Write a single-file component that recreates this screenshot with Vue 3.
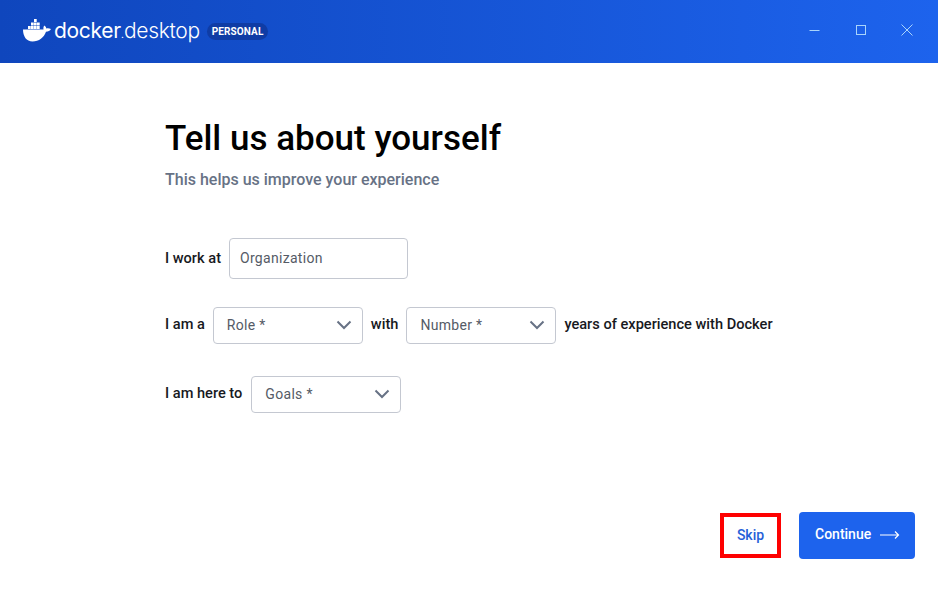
<script setup>
const selects = {
  role: 'Role *',
  number: 'Number *',
  goals: 'Goals *',
}
</script>

<template>
  <div class="app">
    <header class="bar">
      <div class="brand">
        <svg class="whale" width="29" height="24" viewBox="0 0 29 24">
          <g fill="#fff">
            <rect x="5" y="8" width="2.700" height="3" /><rect x="8" y="8" width="2.700" height="3" /><rect x="11" y="8" width="2.700" height="3" /><rect x="14" y="8" width="2.700" height="3" />
            <rect x="8" y="4.500" width="2.700" height="3" /><rect x="11" y="4.500" width="2.700" height="3" /><rect x="14" y="4.500" width="2.700" height="3" />
            <rect x="11" y="1" width="2.700" height="3" />
            <path d="M0 11.500H20.500c-.3-1.600 0-3 .9-4 1.100.8 1.700 1.800 1.900 2.900 1.500-.5 3-.3 4.700.6-1 1.900-2.800 2.700-5 2.800C21 19.500 16 23.500 9.500 23.500 3.500 23.500 0 18.500 0 11.500z" />
          </g>
        </svg>
        <span class="wordmark"><span class="docker">docker</span><span class="dot">.</span><span class="desktop">desktop</span></span>
        <span class="badge">PERSONAL</span>
      </div>
      <div class="win">
        <svg width="12" height="12" viewBox="0 0 12 12"><path d="M0.500 6.500h10" stroke="#a9d4fb" fill="none" /></svg>
        <svg width="12" height="12" viewBox="0 0 12 12"><rect x="1.500" y="1.500" width="9" height="9" stroke="#a9d4fb" fill="none" /></svg>
        <svg width="12" height="12" viewBox="0 0 12 12"><path d="M0.500 .5l11 11M11.500 .5l-11 11" stroke="#a9d4fb" fill="none" /></svg>
      </div>
    </header>

    <main class="content">
      <h1>Tell us about yourself</h1>
      <p class="sub">This helps us improve your experience</p>

      <div class="row row-first">
        <span class="lbl">I work at</span>
        <div class="field input"><span class="val">Organization</span></div>
      </div>

      <div class="row row-second">
        <span class="lbl lift">I am a</span>
        <div class="field select"><span class="val">{{ selects.role }}</span>
          <svg width="16" height="10" viewBox="0 0 16 10"><path d="M1.500 1.500L8 8l6.500-6.500" fill="none" stroke="#677285" stroke-width="2" /></svg>
        </div>
        <span class="lbl lift">with</span>
        <div class="field select"><span class="val">{{ selects.number }}</span>
          <svg width="16" height="10" viewBox="0 0 16 10"><path d="M1.500 1.500L8 8l6.500-6.500" fill="none" stroke="#677285" stroke-width="2" /></svg>
        </div>
        <span class="lbl lift">years of experience with Docker</span>
      </div>

      <div class="row row-third">
        <span class="lbl lift">I am here to</span>
        <div class="field select"><span class="val">{{ selects.goals }}</span>
          <svg width="16" height="10" viewBox="0 0 16 10"><path d="M1.500 1.500L8 8l6.500-6.500" fill="none" stroke="#677285" stroke-width="2" /></svg>
        </div>
      </div>
    </main>

    <footer class="actions">
      <button class="skip"><span class="btn-text">Skip</span></button>
      <button class="continue"><span class="btn-text">Continue</span>
        <svg width="20" height="10" viewBox="0 0 20 10"><path d="M0 5h18.500M15 1.500l3.500 3.500-3.500 3.500" fill="none" stroke="#fff" stroke-width="1.200" /></svg>
      </button>
    </footer>
  </div>
</template>

<style>
html, body { margin: 0; background: #fff; }
</style>

<style scoped>
.app {
  width: 938px;
  height: 599px;
  display: flex;
  flex-direction: column;
  font-family: Roboto, "Liberation Sans", sans-serif;
  overflow: hidden;
  background: #fff;
}
.bar {
  height: 63px;
  flex: none;
  display: flex;
  align-items: center;
  justify-content: space-between;
  background: linear-gradient(90deg, #0f46bd 0%, #1d63ed 100%);
  padding: 0 25px 0 23px;
}
.brand { display: flex; align-items: center; }
.whale { margin-right: 2px; margin-top: -3px; }
.wordmark {
  font-family: Inter, Lato, sans-serif;
  font-size: 21px;
  color: #fff;
  letter-spacing: -0.3px;
  line-height: 26px;
  font-weight: 300;
  margin-top: 1px;
}
.docker { font-weight: 400; }
.desktop { font-weight: 300; }
.dot { font-weight: 300; font-size: 12px; }
.badge {
  margin-left: 7px;
  background: #0f3ca5;
  color: #fff;
  font-size: 10px;
  font-weight: 700;
  letter-spacing: 0.1px;
  line-height: 17px;
  padding: 0 5px;
  border-radius: 9px;
}
.win { display: flex; align-items: center; gap: 34px; margin-top: -3px; }
.content { padding: 0 0 0 165px; flex: 1; }
h1 {
  margin: 54px 0 0;
  font-size: 35px;
  line-height: 44px;
  font-weight: 500;
  color: #000;
}
.sub {
  margin: 8px 0 0;
  font-size: 16px;
  line-height: 22px;
  font-weight: 500;
  color: #677285;
}
.row { display: flex; align-items: center; gap: 8px; }
.row-first { margin-top: 47px; }
.row-second { margin-top: 28px; }
.row-third { margin-top: 32px; gap: 9px; }
.lbl { font-size: 14.6px; font-weight: 500; color: #17191e; white-space: nowrap; padding-bottom: 2px; }
.lift { padding-bottom: 4px; }
.val { padding-bottom: 2px; }
.field {
  box-sizing: border-box;
  border: 1px solid #c4c8d1;
  border-radius: 4px;
  background: #fff;
  font-size: 14px;
  letter-spacing: 0.3px;
  color: #555b66;
  display: flex;
  align-items: center;
}
.field svg { margin-bottom: 2px; }
.input { width: 179px; height: 41px; padding-left: 10px; }
.select {
  width: 150px;
  height: 37px;
  padding: 0 10px 0 13px;
  justify-content: space-between;
}
.actions {
  display: flex;
  justify-content: flex-end;
  align-items: center;
  gap: 18px;
  padding: 0 23px 40px 0;
}
button { font-family: inherit; font-size: 14px; font-weight: 500; cursor: pointer; }
.btn-text { position: relative; top: -1px; }
.skip {
  box-sizing: border-box;
  width: 61px;
  height: 45px;
  border: 4px solid #fe0000;
  background: #fff;
  color: #2560d8;
  padding: 0;
}
.continue {
  box-sizing: border-box;
  width: 116px;
  height: 47px;
  border: 0;
  border-radius: 4px;
  background: #1d63ed;
  color: #fff;
  display: flex;
  align-items: center;
  gap: 9px;
  padding: 0 0 2px 16px;
}
</style>
